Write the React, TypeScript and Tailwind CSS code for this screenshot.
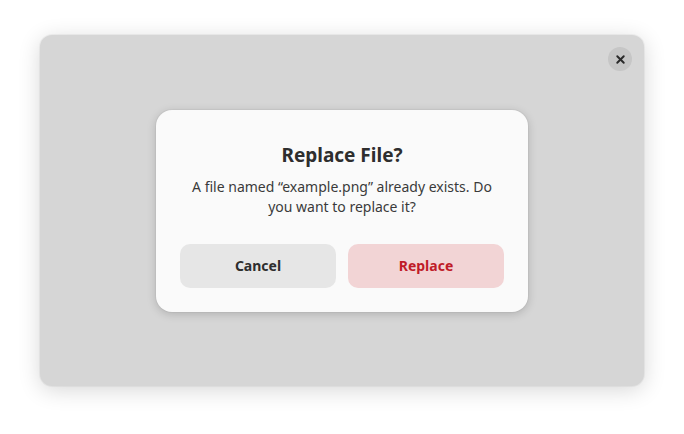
import { X } from "lucide-react";

export default function App() {
  return (
    <div className="flex h-[434px] w-[684px] bg-white px-[40px] pb-[48px] pt-[35px] font-['Noto_Sans',sans-serif]">
      <div className="relative flex flex-1 items-center justify-center rounded-[12px] bg-[#d6d6d6] shadow-[0_4px_22px_rgba(0,0,0,0.16),0_0_0_1px_rgba(0,0,0,0.04)]">
        <button className="absolute right-[12px] top-[12px] flex h-[24px] w-[24px] items-center justify-center rounded-full bg-[#c6c6c6] text-[#2a2a2a]">
          <X size={13} strokeWidth={3.5} />
        </button>

        <div className="flex w-[372px] flex-col items-center rounded-[16px] bg-[#fafafa] px-[24px] pb-[24px] pt-[33px] shadow-[0_2px_10px_rgba(0,0,0,0.18),0_0_0_1px_rgba(0,0,0,0.03)]">
          <h2 className="text-[19px] font-bold leading-[24px] text-[#2e2e2e]">Replace File?</h2>
          <p className="mt-[10px] px-[8px] text-center text-[14px] leading-[20px] text-[#3a3a3a]">
            A file named “example.png” already exists. Do you want to replace it?
          </p>
          <div className="mt-[27px] grid w-full grid-cols-2 gap-[12px]">
            <button className="h-[44px] rounded-[10px] bg-[#e6e6e6] text-[14px] font-bold text-[#2e2e2e]">Cancel</button>
            <button className="h-[44px] rounded-[10px] bg-[#f2d4d5] text-[14px] font-bold text-[#c01c28]">Replace</button>
          </div>
        </div>
      </div>
    </div>
  );
}
